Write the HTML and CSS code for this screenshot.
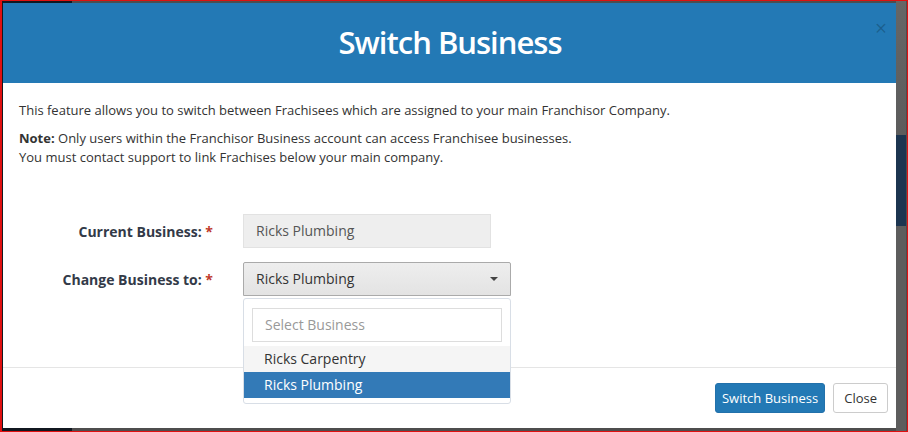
FILE: index.html
```html
<!DOCTYPE html>
<html lang="en">
<head>
    <meta charset="UTF-8">
    <title>Switch Business</title>
    <link rel="stylesheet" href="styles.css">
</head>
<body>
    <div class="frame">
        <div class="modal">
            <div class="modal-header">
                <h1>Switch Business</h1>
                <span class="close-x">&times;</span>
            </div>
            <div class="modal-body">
                <p>This feature allows you to switch between Frachisees which are assigned to your main Franchisor Company.</p>
                <p><strong>Note:</strong> Only users within the Franchisor Business account can access Franchisee businesses.<br>You must contact support to link Frachises below your main company.</p>

                <div class="form">
                    <div class="form-row">
                        <label>Current Business: <span class="req">*</span></label>
                        <div class="input-readonly">Ricks Plumbing</div>
                    </div>
                    <div class="form-row">
                        <label>Change Business to: <span class="req">*</span></label>
                        <div class="select-wrap">
                            <div class="select">
                                <span>Ricks Plumbing</span>
                                <span class="caret"></span>
                            </div>
                            <div class="dropdown">
                                <div class="search">Select Business</div>
                                <div class="option hover">Ricks Carpentry</div>
                                <div class="option selected">Ricks Plumbing</div>
                            </div>
                        </div>
                    </div>
                </div>
            </div>
            <div class="modal-footer">
                <button class="btn btn-primary">Switch Business</button>
                <button class="btn btn-default">Close</button>
            </div>
        </div>
        <div class="side-strip"></div>
    </div>
</body>
</html>
```

FILE: styles.css
```css
:root {
    --primary-color: #2379b5;
    --selected-color: #337ab7;
    --text-color: #333;
    --border-color: #e5e5e5;
}

* {
    margin: 0;
    padding: 0;
    box-sizing: border-box;
    font-family: 'Open Sans', 'Liberation Sans', sans-serif;
}

body {
    width: 908px;
    height: 432px;
    overflow: hidden;
}

.frame {
    position: relative;
    width: 908px;
    height: 432px;
    border: 1px solid #e01010;
    border-left-width: 2px;
    background: linear-gradient(90deg, #111820 0, #111820 70px, #4e4e4e 70px);
    padding: 2px 10px 3px 1px;
    display: flex;
}

.side-strip {
    position: absolute;
    right: 1px;
    top: 0;
    width: 10px;
    height: 100%;
    background: linear-gradient(180deg, #666 0, #5c5c5c 134px, #1c3550 134px, #1c3550 225px, #5d5d5d 225px);
}

.modal {
    width: 894px;
    height: 100%;
    background: #fff;
    display: flex;
    flex-direction: column;
    color: var(--text-color);
}

.modal-header {
    position: relative;
    height: 80px;
    background: var(--primary-color);
    display: flex;
    align-items: center;
    justify-content: center;
}

.modal-header h1 {
    color: #fff;
    font-size: 31px;
    font-weight: 600;
    letter-spacing: -1px;
    margin-top: -2px;
}

.close-x {
    position: absolute;
    top: 15px;
    right: 10px;
    font-size: 21px;
    color: rgba(0, 0, 0, 0.22);
    line-height: 1;
}

.modal-body {
    flex: 1;
    padding: 18px 16px 0;
    font-size: 13px;
    line-height: 19px;
}

.modal-body p {
    margin-bottom: 9px;
}

.modal-body strong {
    font-weight: 700;
}

.form {
    margin-top: 47px;
    display: flex;
    flex-direction: column;
    gap: 14px;
}

.form-row {
    display: flex;
    align-items: center;
    gap: 30px;
}

.form-row label {
    width: 194px;
    text-align: right;
    font-size: 14px;
    font-weight: 700;
    color: #333a48;
}

.req {
    color: #c0392b;
}

.input-readonly {
    width: 248px;
    height: 34px;
    background: #eee;
    border: 1px solid #e2e2e2;
    padding: 0 12px;
    font-size: 14px;
    line-height: 32px;
    color: #555;
}

.select-wrap {
    position: relative;
}

.select {
    width: 268px;
    height: 34px;
    background: linear-gradient(#eee, #e3e3e3);
    border: 1px solid #aaa;
    border-radius: 2px 2px 0 0;
    padding: 0 12px;
    font-size: 14px;
    line-height: 32px;
    color: #333;
    display: flex;
    justify-content: space-between;
    align-items: center;
}

.caret {
    width: 0;
    height: 0;
    border-left: 4px solid transparent;
    border-right: 4px solid transparent;
    border-top: 4px solid #444;
}

.dropdown {
    position: absolute;
    top: 36px;
    left: 0;
    width: 268px;
    background: #fff;
    border: 1px solid #d8dee6;
    border-radius: 3px;
    padding: 9px 0 5px;
    z-index: 5;
}

.search {
    margin: 0 8px 4px;
    height: 34px;
    border: 1px solid #ddd;
    padding: 0 12px;
    font-size: 14px;
    line-height: 32px;
    color: #999;
}

.option {
    height: 26px;
    padding: 0 20px;
    font-size: 14px;
    line-height: 26px;
    color: #333;
}

.option.hover {
    background: #f5f5f5;
}

.option.selected {
    background: var(--selected-color);
    color: #fff;
}

.modal-footer {
    height: 61px;
    border-top: 1px solid var(--border-color);
    display: flex;
    justify-content: flex-end;
    align-items: center;
    gap: 8px;
    padding: 0 9px 0 0;
}

.btn {
    height: 30px;
    padding: 0 10px;
    font-size: 13px;
    border-radius: 3px;
    cursor: pointer;
}

.btn-primary {
    padding: 0 6px;
    background: var(--primary-color);
    border: 1px solid #2271ab;
    color: #fff;
}

.btn-default {
    background: #fff;
    border: 1px solid #ccc;
    color: #333;
}
```
